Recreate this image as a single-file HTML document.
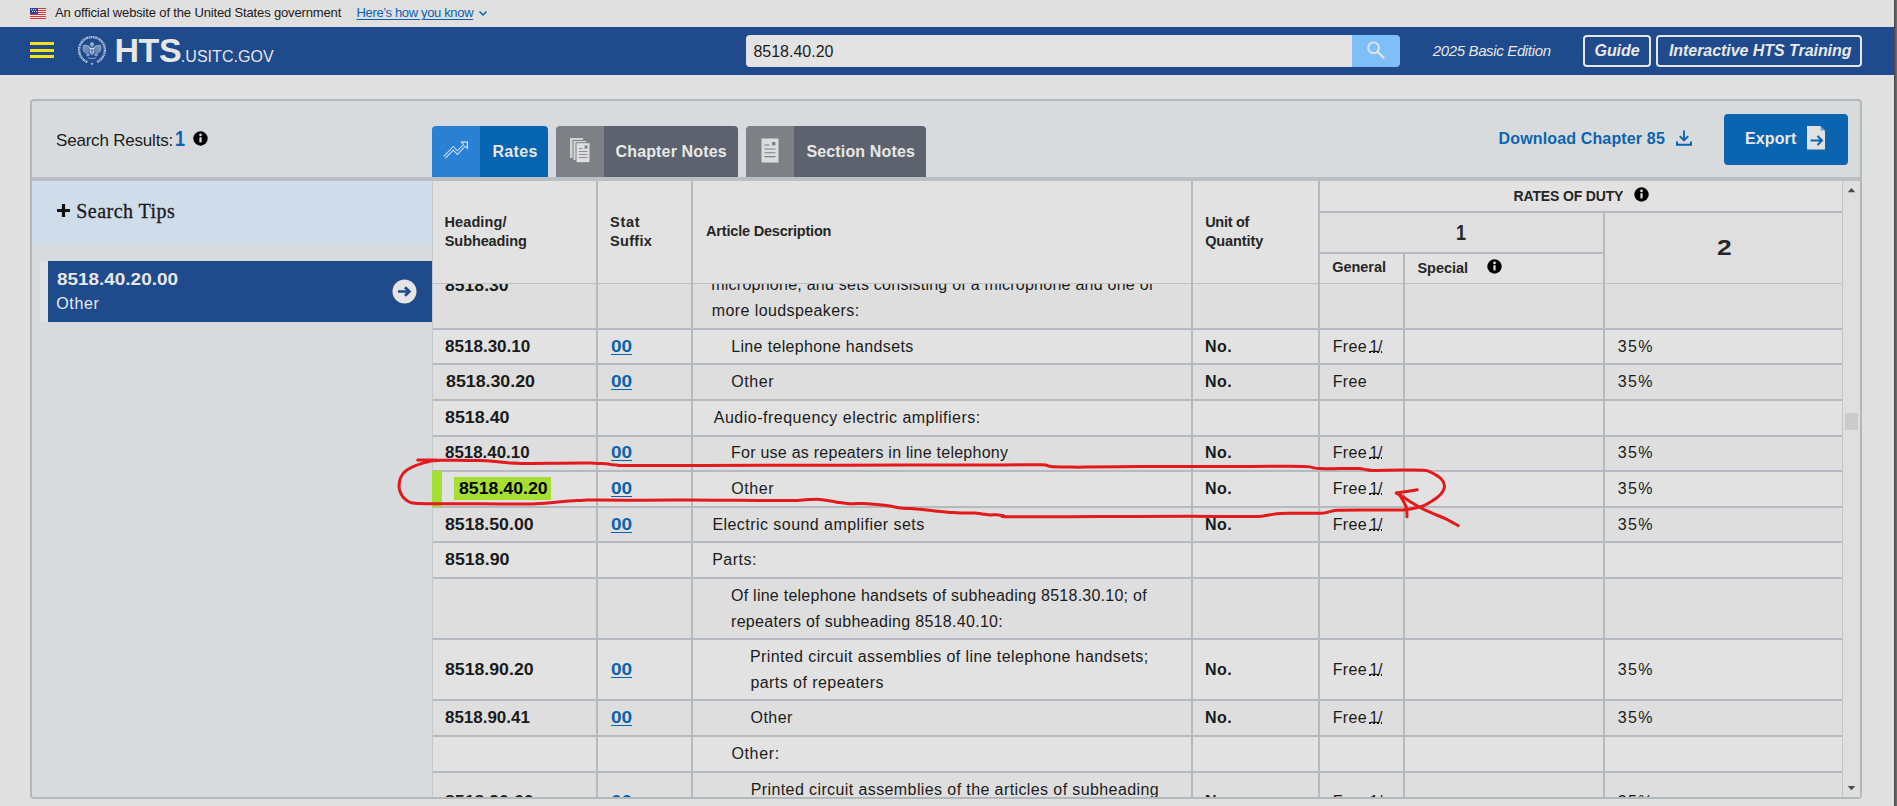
<!DOCTYPE html>
<html lang="en"><head><meta charset="utf-8"><title>Harmonized Tariff Schedule Search</title>
<style>
*{box-sizing:border-box;margin:0;padding:0}
html,body{width:1897px;height:806px;overflow:hidden}
body{position:relative;background:#e0e0e0;font-family:"Liberation Sans",sans-serif;color:#1b1b1b;font-size:16px}
.abs{position:absolute}
.t{position:absolute;white-space:nowrap;line-height:1}
a{color:#0b62ad}
/* banner */
#banner{left:0;top:0;width:1897px;height:27px;background:#e0e0e0}
#nav{left:0;top:27px;width:1897px;height:48px;background:#1f4a8c}
.bar{position:absolute;left:30px;width:24px;height:3px;background:#f7e017}
#searchbox{left:746px;top:35px;width:607px;height:32px;background:#e3e3e3;border-radius:4px 0 0 4px}
#searchbtn{left:1352px;top:35px;width:48px;height:32px;background:#7ebff8;border-radius:0 4px 4px 0}
.navbtn{position:absolute;top:35px;height:32px;border:2px solid #e6e6e6;border-radius:4px;color:#e6e6e6;font-weight:bold;font-style:italic}
/* panel */
#panel{left:30px;top:99px;width:1832px;height:700px;background:#d8dbdd;border:2px solid #b2b9bd;border-radius:4px}
#sep{left:32px;top:177px;width:1828px;height:4px;background:#b9bfc3}
.tab{position:absolute;top:126px;height:51px;border-radius:4px 4px 0 0;overflow:hidden}
.tab .ic{position:absolute;left:0;top:0;width:48px;height:51px}
.tab .tx{position:absolute;left:48px;top:0;right:0;height:51px}
.tab span{position:absolute;color:#e8e8e8;font-weight:bold;white-space:nowrap;line-height:1}
#tips{left:32px;top:181px;width:400px;height:64px;background:#cfdcea}
#item{left:48px;top:261px;width:384px;height:61px;background:#1f4a8c}
#itemedge{left:40px;top:261px;width:8px;height:61px;background:#e0e1e2;border-radius:3px 0 0 3px}
#export{left:1724px;top:114px;width:124px;height:51px;background:#0b64b0;border-radius:4px}
/* table */
#tbl{left:432px;top:181px;width:1411px;height:616px;background:#e2e2e2;overflow:hidden}
.vl{position:absolute;width:2px;background:#b4babf}
.hl{position:absolute;height:2px;background:#b4babf}
.row{position:absolute;left:0;width:1411px}
.row.alt{background:#dedede}
.code{font-weight:bold;left:13px}
.stat{left:179px;font-weight:bold;text-decoration:underline;color:#0b62ad}
.unit{left:773px;font-weight:bold}
.gen{left:901px}
.c2{left:1186px}
.th{position:absolute;font-weight:bold;color:#262626;white-space:nowrap;line-height:1}
#sb{left:1843px;top:181px;width:17px;height:616px;background:#dfdfdf}
#edge{left:1894px;top:0;width:3px;height:806px;background:linear-gradient(90deg,#454545,#5c5c5c 50%,#707070)}

</style></head>
<body>
<!-- ===== top banner ===== -->
<div id="banner" class="abs">
  <svg class="abs" style="left:30px;top:8px" width="16" height="11" viewBox="0 0 16 11">
    <rect width="16" height="11" fill="#e8e8e8"/>
    <g fill="#d83a3a"><rect y="0" width="16" height="1"/><rect y="2" width="16" height="1"/><rect y="4" width="16" height="1"/><rect y="6" width="16" height="1"/><rect y="8" width="16" height="1"/><rect y="10" width="16" height="1"/></g>
    <rect width="8" height="6" fill="#2a3f9d"/>
    <g fill="#e8e8e8"><rect x="1" y="1" width="1" height="1"/><rect x="3" y="1" width="1" height="1"/><rect x="5" y="1" width="1" height="1"/><rect x="2" y="3" width="1" height="1"/><rect x="4" y="3" width="1" height="1"/><rect x="6" y="3" width="1" height="1"/></g>
  </svg>
  <svg class="abs" style="left:478px;top:10px" width="10" height="7" viewBox="0 0 10 7"><path d="M1.5 1.5 L5 5 L8.5 1.5" fill="none" stroke="#0b5fb0" stroke-width="1.5"/></svg>
</div>

<!-- ===== blue nav ===== -->
<div id="nav" class="abs"></div>
<div class="bar" style="top:42px"></div><div class="bar" style="top:49px"></div><div class="bar" style="top:55px"></div>
<svg class="abs" style="left:77px;top:35px" width="30" height="30" viewBox="0 0 30 30">
  <path d="M10.38 27.04 A12.9 12.9 0 1 1 19.62 27.04" fill="none" stroke="#c9d4e8" stroke-opacity=".82" stroke-width="2.4" stroke-dasharray="1.7 .55 1.1 .5 2 .6"/>
  <path d="M15 27.2l.5 1 1.1.1-.8.8.2 1.1-1-.6-1 .6.2-1.1-.8-.8 1.100-.1z" fill="#c9d4e8" fill-opacity=".8"/>
  <g fill="#d5deee" transform="translate(0 -.6)">
    <path d="M13.6 8.2h2.8l.5 2.4-1 1.6h-1.800l-1-1.600z" fill-opacity=".85"/>
    <path d="M13.4 12.600 C11 10.400 8.600 9.800 6.200 10.800 C5.300 12.800 5.400 15 6.400 16.800 C7.600 18.600 9.400 19.600 11.400 19.600 L12.800 15.600z" fill-opacity=".6"/>
    <path d="M16.600 12.600 C19 10.400 21.400 9.800 23.800 10.800 C24.700 12.800 24.600 15 23.600 16.800 C22.400 18.600 20.600 19.600 18.600 19.600 L17.200 15.600z" fill-opacity=".6"/>
    <path d="M12.800 13.400h4.400v5.200l-2.200 2.400-2.200-2.400z" fill-opacity=".95"/>
    <path d="M9 20.200l3.200-1.200 .8 1.800-3 1.400zM21 20.200l-3.200-1.200-.8 1.800 3 1.400z" fill-opacity=".6"/>
    <path d="M10.800 22.800 Q15 24.400 19.200 22.800 L19 23.800 Q15 25.200 11 23.800z" fill-opacity=".6"/>
  </g>
  <g stroke="#1f4a8c" stroke-width=".7" stroke-opacity=".75" fill="none">
    <path d="M7.200 12.200l5 3M6.600 14.200l5.400 2.400M7.400 16.400l4.600 1.400M9 11l3.800 3.600M22.800 12.200l-5 3M23.400 14.200l-5.400 2.400M22.600 16.400l-4.600 1.400M21 11l-3.800 3.600"/>
    <path d="M14.300 14v5.800M15.700 14v5.800M12.800 15.400h4.400M13.800 9.800h2.400"/>
  </g>
</svg>

<div id="searchbox" class="abs"></div>
<div id="searchbtn" class="abs">
  <svg class="abs" style="left:12px;top:4px" width="24" height="24" viewBox="0 0 24 24"><circle cx="9.6" cy="8.8" r="5.4" fill="none" stroke="#e4e4e4" stroke-width="1.9"/><path d="M13.6 12.8 L20.2 19.4" stroke="#e4e4e4" stroke-width="2.2" stroke-linecap="butt"/></svg>
</div>
<div class="navbtn" style="left:1583px;width:68px"></div>
<div class="navbtn" style="left:1656px;width:206px"></div>

<!-- ===== main panel ===== -->
<div id="panel" class="abs"></div>
<svg class="abs" style="left:193px;top:131px" width="15" height="15" viewBox="0 0 15 15"><circle cx="7.5" cy="7.5" r="7.2" fill="#000"/><rect x="6.4" y="6.2" width="2.2" height="5.2" fill="#d8dbdd"/><circle cx="7.5" cy="3.9" r="1.3" fill="#d8dbdd"/></svg>

<!-- tabs -->
<div class="tab" style="left:432px;width:116px">
  <div class="ic" style="background:#2a81d4">
    <svg class="abs" style="left:10px;top:13px" width="28" height="22" viewBox="0 0 28 22">
      <g fill="none" stroke-linejoin="miter" stroke-linecap="butt">
        <path d="M2.600 18.300 L11.400 9.200 L15.400 13.600 L23.200 5.600" stroke="#d4e4f5" stroke-width="3.500"/>
        <path d="M18 2.600 H26 V10.600 Z" fill="#d4e4f5" stroke="none"/>
        <path d="M2.600 18.300 L11.400 9.200 L15.400 13.600 L23.600 5.200" stroke="#2a81d4" stroke-width="1.500"/>
        <path d="M20.600 3.700 H24.900 V8 Z" fill="#2a81d4" stroke="none"/>
      </g>
    </svg>
  </div>
  <div class="tx" style="background:#0764b0"></div>
</div>
<div class="tab" style="left:556px;width:182px">
  <div class="ic" style="background:#7d8185">
    <svg class="abs" style="left:13px;top:11px" width="22" height="26" viewBox="0 0 22 26">
      <path d="M1 1h13v20h-13z" fill="#d3d3d3"/>
      <path d="M4 3.500h13.500v20h-13.500z" fill="#d8d8d8" stroke="#7d8185" stroke-width="1"/>
      <path d="M7 5.700h14v20h-14z" fill="#dedede" stroke="#7d8185" stroke-width="1"/>
      <path d="M10 14.500h8.500M10 17.500h8.500M10 20.500h8.500M10 11.500h3.500" stroke="#8b8f93" stroke-width="1.100"/>
      <rect x="15.500" y="8.500" width="3" height="3" fill="#7d8185"/>
    </svg>
  </div>
  <div class="tx" style="background:#5c626e"></div>
</div>
<div class="tab" style="left:746px;width:180px">
  <div class="ic" style="background:#7d8185">
    <svg class="abs" style="left:15px;top:12px" width="18" height="25" viewBox="0 0 18 25"><path d="M.5 .5h17v24h-17z" fill="#dcdcdc"/><path d="M3.5 11h11M3.5 14.800h11M3.5 18.600h11M3.5 7h5" stroke="#7d8185" stroke-width="1.1"/><rect x="11" y="4" width="3.4" height="3.4" fill="#7d8185"/></svg>
  </div>
  <div class="tx" style="background:#5c626e"></div>
</div>
<svg class="abs" style="left:1675px;top:129px" width="18" height="18" viewBox="0 0 18 18"><path d="M9 1.5v9.5M4.8 7.2 9 11.4l4.2-4.2M2 12.5v3.2h14v-3.2" fill="none" stroke="#0b64b0" stroke-width="1.9"/></svg>
<div id="export" class="abs">
  <svg class="abs" style="left:82px;top:11px" width="20" height="27" viewBox="0 0 20 27"><path d="M1 1h13.500l4.500 4.500v19H1z" fill="#e1e1e1"/><path d="M14.500 1v4.500h4.500" fill="#0b64b0" opacity=".5"/><path d="M4.500 15.500h11.500M11.500 11l4.500 4.500-4.500 4.500" fill="none" stroke="#0b64b0" stroke-width="2"/></svg>
</div>

<div id="sep" class="abs"></div>

<!-- left column -->
<div id="tips" class="abs"></div>
<svg class="abs" style="left:56px;top:203px" width="15" height="15" viewBox="0 0 15 15"><path d="M7.5 1v13M1 7.5h13" stroke="#111" stroke-width="3.2"/></svg>
<div id="itemedge" class="abs"></div>
<div id="item" class="abs">
  <svg class="abs" style="left:344px;top:18px" width="25" height="25" viewBox="0 0 25 25"><circle cx="12.5" cy="12.5" r="12" fill="#e4e4e4"/><path d="M6 12.500h11.500M13 8.200l4.400 4.300-4.400 4.300" fill="none" stroke="#1f4a8c" stroke-width="2.700" stroke-linejoin="miter"/></svg>
</div>

<!-- ===== table ===== -->
<div id="tbl" class="abs">
<div class="row alt" style="top:103px;height:46px"></div>
<div class="hl" style="left:0;top:147px;width:1411px"></div>
<div class="row" style="top:149px;height:35px"></div>
<div class="hl" style="left:0;top:182px;width:1411px"></div>
<div class="row alt" style="top:184px;height:36px"></div>
<div class="hl" style="left:0;top:218px;width:1411px"></div>
<div class="row" style="top:220px;height:36px"></div>
<div class="hl" style="left:0;top:254px;width:1411px"></div>
<div class="row alt" style="top:256px;height:35px"></div>
<div class="hl" style="left:0;top:289px;width:1411px"></div>
<div class="row" style="top:291px;height:36px"></div>
<div class="hl" style="left:0;top:325px;width:1411px"></div>
<div class="abs" style="left:0;top:290px;width:10px;height:36px;background:#a5df32;z-index:3"></div>
<div class="abs" style="left:22px;top:296px;width:97px;height:23px;background:#a5df32"></div>
<div class="row alt" style="top:327px;height:35px"></div>
<div class="hl" style="left:0;top:360px;width:1411px"></div>
<div class="row" style="top:362px;height:36px"></div>
<div class="hl" style="left:0;top:396px;width:1411px"></div>
<div class="row alt" style="top:398px;height:61px"></div>
<div class="hl" style="left:0;top:457px;width:1411px"></div>
<div class="row" style="top:459px;height:61px"></div>
<div class="hl" style="left:0;top:518px;width:1411px"></div>
<div class="row alt" style="top:520px;height:36px"></div>
<div class="hl" style="left:0;top:554px;width:1411px"></div>
<div class="row" style="top:556px;height:36px"></div>
<div class="hl" style="left:0;top:590px;width:1411px"></div>
<div class="row alt" style="top:592px;height:61px"></div>
<div class="hl" style="left:0;top:651px;width:1411px"></div>
<span id="c0" class="t" style="left:13.0px;top:97px;font-size:16px;color:#1b1b1b;font-weight:bold;transform:scaleX(1.1);transform-origin:0 50%;">8518.30</span>
<span id="d0_0" class="t" style="left:279.2px;top:96px;font-size:16px;color:#1b1b1b;letter-spacing:0.25px;">microphone, and sets consisting of a microphone and one of</span>
<span id="d0_1" class="t" style="left:279.8px;top:122px;font-size:16px;color:#1b1b1b;letter-spacing:0.4px;">more loudspeakers:</span>
<span id="c1" class="t" style="left:13.3px;top:158px;font-size:16px;color:#1b1b1b;font-weight:bold;transform:scaleX(1.065);transform-origin:0 50%;">8518.30.10</span>
<span id="s1" class="t" style="left:178.8px;top:158px;font-size:16px;color:#0b62ad;font-weight:bold;transform:scaleX(1.188);transform-origin:0 50%;text-decoration:underline;text-underline-offset:2px">00</span>
<span id="d1_0" class="t" style="left:299.2px;top:158px;font-size:16px;color:#1b1b1b;letter-spacing:0.35px;">Line telephone handsets</span>
<span id="u1" class="t" style="left:773.0px;top:158px;font-size:16px;color:#1b1b1b;font-weight:bold;letter-spacing:0.4px;">No.</span>
<span id="g1" class="t" style="left:900.7px;top:158px;font-size:16px;color:#1b1b1b;letter-spacing:0.35px;">Free</span>
<span id="f1" class="t" style="left:937.4px;top:158px;font-size:16px;color:#1b1b1b;letter-spacing:-0.2px;text-decoration:underline dotted;text-decoration-thickness:1.6px;text-underline-offset:-1px;text-decoration-skip-ink:none">1/</span>
<span id="p1" class="t" style="left:1185.8px;top:158px;font-size:16px;color:#1b1b1b;letter-spacing:1.35px;">35%</span>
<span id="c2" class="t" style="left:13.6px;top:193px;font-size:16px;color:#1b1b1b;font-weight:bold;transform:scaleX(1.111);transform-origin:0 50%;">8518.30.20</span>
<span id="s2" class="t" style="left:178.8px;top:193px;font-size:16px;color:#0b62ad;font-weight:bold;transform:scaleX(1.188);transform-origin:0 50%;text-decoration:underline;text-underline-offset:2px">00</span>
<span id="d2_0" class="t" style="left:299.3px;top:193px;font-size:16px;color:#1b1b1b;letter-spacing:0.55px;">Other</span>
<span id="u2" class="t" style="left:773.0px;top:193px;font-size:16px;color:#1b1b1b;font-weight:bold;letter-spacing:0.4px;">No.</span>
<span id="g2" class="t" style="left:900.7px;top:193px;font-size:16px;color:#1b1b1b;letter-spacing:0.35px;">Free</span>
<span id="p2" class="t" style="left:1185.8px;top:193px;font-size:16px;color:#1b1b1b;letter-spacing:1.35px;">35%</span>
<span id="c3" class="t" style="left:13.0px;top:229px;font-size:16px;color:#1b1b1b;font-weight:bold;transform:scaleX(1.116);transform-origin:0 50%;">8518.40</span>
<span id="d3_0" class="t" style="left:281.8px;top:229px;font-size:16px;color:#1b1b1b;letter-spacing:0.5px;">Audio-frequency electric amplifiers:</span>
<span id="c4" class="t" style="left:13.4px;top:264px;font-size:16px;color:#1b1b1b;font-weight:bold;transform:scaleX(1.056);transform-origin:0 50%;">8518.40.10</span>
<span id="s4" class="t" style="left:178.8px;top:264px;font-size:16px;color:#0b62ad;font-weight:bold;transform:scaleX(1.188);transform-origin:0 50%;text-decoration:underline;text-underline-offset:2px">00</span>
<span id="d4_0" class="t" style="left:299.0px;top:264px;font-size:16px;color:#1b1b1b;letter-spacing:0.25px;">For use as repeaters in line telephony</span>
<span id="u4" class="t" style="left:773.0px;top:264px;font-size:16px;color:#1b1b1b;font-weight:bold;letter-spacing:0.4px;">No.</span>
<span id="g4" class="t" style="left:900.7px;top:264px;font-size:16px;color:#1b1b1b;letter-spacing:0.35px;">Free</span>
<span id="f4" class="t" style="left:937.4px;top:264px;font-size:16px;color:#1b1b1b;letter-spacing:-0.2px;text-decoration:underline dotted;text-decoration-thickness:1.6px;text-underline-offset:-1px;text-decoration-skip-ink:none">1/</span>
<span id="p4" class="t" style="left:1185.8px;top:264px;font-size:16px;color:#1b1b1b;letter-spacing:1.35px;">35%</span>
<span id="c5" class="t" style="left:26.7px;top:300px;font-size:16px;color:#000;font-weight:bold;transform:scaleX(1.108);transform-origin:0 50%;">8518.40.20</span>
<span id="s5" class="t" style="left:178.8px;top:300px;font-size:16px;color:#0b62ad;font-weight:bold;transform:scaleX(1.188);transform-origin:0 50%;text-decoration:underline;text-underline-offset:2px">00</span>
<span id="d5_0" class="t" style="left:299.3px;top:300px;font-size:16px;color:#1b1b1b;letter-spacing:0.55px;">Other</span>
<span id="u5" class="t" style="left:773.0px;top:300px;font-size:16px;color:#1b1b1b;font-weight:bold;letter-spacing:0.4px;">No.</span>
<span id="g5" class="t" style="left:900.7px;top:300px;font-size:16px;color:#1b1b1b;letter-spacing:0.35px;">Free</span>
<span id="f5" class="t" style="left:937.4px;top:300px;font-size:16px;color:#1b1b1b;letter-spacing:-0.2px;text-decoration:underline dotted;text-decoration-thickness:1.6px;text-underline-offset:-1px;text-decoration-skip-ink:none">1/</span>
<span id="p5" class="t" style="left:1185.8px;top:300px;font-size:16px;color:#1b1b1b;letter-spacing:1.35px;">35%</span>
<span id="c6" class="t" style="left:13.4px;top:336px;font-size:16px;color:#1b1b1b;font-weight:bold;transform:scaleX(1.106);transform-origin:0 50%;">8518.50.00</span>
<span id="s6" class="t" style="left:178.8px;top:336px;font-size:16px;color:#0b62ad;font-weight:bold;transform:scaleX(1.188);transform-origin:0 50%;text-decoration:underline;text-underline-offset:2px">00</span>
<span id="d6_0" class="t" style="left:280.4px;top:336px;font-size:16px;color:#1b1b1b;letter-spacing:0.45px;">Electric sound amplifier sets</span>
<span id="u6" class="t" style="left:773.0px;top:336px;font-size:16px;color:#1b1b1b;font-weight:bold;letter-spacing:0.4px;">No.</span>
<span id="g6" class="t" style="left:900.7px;top:336px;font-size:16px;color:#1b1b1b;letter-spacing:0.35px;">Free</span>
<span id="f6" class="t" style="left:937.4px;top:336px;font-size:16px;color:#1b1b1b;letter-spacing:-0.2px;text-decoration:underline dotted;text-decoration-thickness:1.6px;text-underline-offset:-1px;text-decoration-skip-ink:none">1/</span>
<span id="p6" class="t" style="left:1185.8px;top:336px;font-size:16px;color:#1b1b1b;letter-spacing:1.35px;">35%</span>
<span id="c7" class="t" style="left:13.0px;top:371px;font-size:16px;color:#1b1b1b;font-weight:bold;transform:scaleX(1.116);transform-origin:0 50%;">8518.90</span>
<span id="d7_0" class="t" style="left:280.2px;top:371px;font-size:16px;color:#1b1b1b;letter-spacing:0.5px;">Parts:</span>
<span id="d8_0" class="t" style="left:299.0px;top:407px;font-size:16px;color:#1b1b1b;letter-spacing:0.25px;">Of line telephone handsets of subheading 8518.30.10; of</span>
<span id="d8_1" class="t" style="left:299.0px;top:433px;font-size:16px;color:#1b1b1b;letter-spacing:0.3px;">repeaters of subheading 8518.40.10:</span>
<span id="c9" class="t" style="left:13.4px;top:481px;font-size:16px;color:#1b1b1b;font-weight:bold;transform:scaleX(1.106);transform-origin:0 50%;">8518.90.20</span>
<span id="s9" class="t" style="left:178.8px;top:481px;font-size:16px;color:#0b62ad;font-weight:bold;transform:scaleX(1.188);transform-origin:0 50%;text-decoration:underline;text-underline-offset:2px">00</span>
<span id="d9_0" class="t" style="left:317.9px;top:468px;font-size:16px;color:#1b1b1b;letter-spacing:0.4px;">Printed circuit assemblies of line telephone handsets;</span>
<span id="d9_1" class="t" style="left:318.4px;top:494px;font-size:16px;color:#1b1b1b;letter-spacing:0.45px;">parts of repeaters</span>
<span id="u9" class="t" style="left:773.0px;top:481px;font-size:16px;color:#1b1b1b;font-weight:bold;letter-spacing:0.4px;">No.</span>
<span id="g9" class="t" style="left:900.7px;top:481px;font-size:16px;color:#1b1b1b;letter-spacing:0.35px;">Free</span>
<span id="f9" class="t" style="left:937.4px;top:481px;font-size:16px;color:#1b1b1b;letter-spacing:-0.2px;text-decoration:underline dotted;text-decoration-thickness:1.6px;text-underline-offset:-1px;text-decoration-skip-ink:none">1/</span>
<span id="p9" class="t" style="left:1185.8px;top:481px;font-size:16px;color:#1b1b1b;letter-spacing:1.35px;">35%</span>
<span id="c10" class="t" style="left:13.0px;top:529px;font-size:16px;color:#1b1b1b;font-weight:bold;transform:scaleX(1.059);transform-origin:0 50%;">8518.90.41</span>
<span id="s10" class="t" style="left:178.8px;top:529px;font-size:16px;color:#0b62ad;font-weight:bold;transform:scaleX(1.188);transform-origin:0 50%;text-decoration:underline;text-underline-offset:2px">00</span>
<span id="d10_0" class="t" style="left:318.5px;top:529px;font-size:16px;color:#1b1b1b;letter-spacing:0.45px;">Other</span>
<span id="u10" class="t" style="left:773.0px;top:529px;font-size:16px;color:#1b1b1b;font-weight:bold;letter-spacing:0.4px;">No.</span>
<span id="g10" class="t" style="left:900.7px;top:529px;font-size:16px;color:#1b1b1b;letter-spacing:0.35px;">Free</span>
<span id="f10" class="t" style="left:937.4px;top:529px;font-size:16px;color:#1b1b1b;letter-spacing:-0.2px;text-decoration:underline dotted;text-decoration-thickness:1.6px;text-underline-offset:-1px;text-decoration-skip-ink:none">1/</span>
<span id="p10" class="t" style="left:1185.8px;top:529px;font-size:16px;color:#1b1b1b;letter-spacing:1.35px;">35%</span>
<span id="d11_0" class="t" style="left:299.4px;top:565px;font-size:16px;color:#1b1b1b;letter-spacing:0.65px;">Other:</span>
<span id="c12" class="t" style="left:13.4px;top:613px;font-size:16px;color:#1b1b1b;font-weight:bold;transform:scaleX(1.106);transform-origin:0 50%;">8518.90.60</span>
<span id="s12" class="t" style="left:178.8px;top:613px;font-size:16px;color:#0b62ad;font-weight:bold;transform:scaleX(1.188);transform-origin:0 50%;text-decoration:underline;text-underline-offset:2px">00</span>
<span id="d12_0" class="t" style="left:318.7px;top:601px;font-size:16px;color:#1b1b1b;letter-spacing:0.4px;">Printed circuit assemblies of the articles of subheading</span>
<span id="d12_1" class="t" style="left:318.5px;top:626px;font-size:16px;color:#1b1b1b;">8518.21, 8518.22 or 8518.29</span>
<span id="u12" class="t" style="left:773.0px;top:613px;font-size:16px;color:#1b1b1b;font-weight:bold;letter-spacing:0.4px;">No.</span>
<span id="g12" class="t" style="left:900.7px;top:613px;font-size:16px;color:#1b1b1b;letter-spacing:0.35px;">Free</span>
<span id="f12" class="t" style="left:937.4px;top:613px;font-size:16px;color:#1b1b1b;letter-spacing:-0.2px;text-decoration:underline dotted;text-decoration-thickness:1.6px;text-underline-offset:-1px;text-decoration-skip-ink:none">1/</span>
<span id="p12" class="t" style="left:1185.8px;top:613px;font-size:16px;color:#1b1b1b;letter-spacing:1.35px;">35%</span>
  <!-- header overlay -->
  <div class="abs" style="left:0;top:0;width:1411px;height:102px;background:#e2e2e2"></div>
  <div class="abs" style="left:888px;top:32px;width:285px;height:40px;background:#dfdfdf"></div>
  <div class="abs" style="left:1173px;top:32px;width:238px;height:70px;background:#dfdfdf"></div>
  <div class="hl" style="left:0;top:102px;width:1411px;height:1px;background:#bcc1c5"></div>
  <div class="hl" style="left:886px;top:30px;width:525px"></div>
  <div class="hl" style="left:886px;top:71px;width:286px"></div>
  <svg class="abs" style="left:1202px;top:6px" width="15" height="15" viewBox="0 0 15 15"><circle cx="7.5" cy="7.5" r="7.2" fill="#000"/><rect x="6.4" y="6.2" width="2.2" height="5.2" fill="#e2e2e2"/><circle cx="7.5" cy="3.9" r="1.3" fill="#e2e2e2"/></svg>
  <svg class="abs" style="left:1055px;top:78px" width="15" height="15" viewBox="0 0 15 15"><circle cx="7.5" cy="7.5" r="7.2" fill="#000"/><rect x="6.4" y="6.2" width="2.2" height="5.2" fill="#e2e2e2"/><circle cx="7.5" cy="3.9" r="1.3" fill="#e2e2e2"/></svg>
  <span id="h1a" class="t" style="left:12.5px;top:34px;font-size:14.5px;color:#262626;font-weight:bold;letter-spacing:0.1px;">Heading/</span>
<span id="h1b" class="t" style="left:12.8px;top:53px;font-size:14.5px;color:#262626;font-weight:bold;letter-spacing:-0.1px;">Subheading</span>
<span id="h2a" class="t" style="left:178.0px;top:34px;font-size:14.5px;color:#262626;font-weight:bold;letter-spacing:0.75px;">Stat</span>
<span id="h2b" class="t" style="left:178.1px;top:53px;font-size:14.5px;color:#262626;font-weight:bold;letter-spacing:0.3px;">Suffix</span>
<span id="h3" class="t" style="left:274.1px;top:43px;font-size:14.5px;color:#262626;font-weight:bold;letter-spacing:-0.2px;">Article Description</span>
<span id="h4a" class="t" style="left:773.2px;top:34px;font-size:14.5px;color:#262626;font-weight:bold;letter-spacing:-0.3px;">Unit of</span>
<span id="h4b" class="t" style="left:773.2px;top:53px;font-size:14.5px;color:#262626;font-weight:bold;letter-spacing:-0.1px;">Quantity</span>
<span id="h5" class="t" style="left:1081.5px;top:8px;font-size:14px;color:#262626;font-weight:bold;letter-spacing:-0.15px;">RATES OF DUTY</span>
<span id="h6" class="t" style="left:1024.2px;top:41px;font-size:22px;color:#262626;font-weight:bold;transform:scaleX(0.82);transform-origin:0 50%;">1</span>
<span id="h7" class="t" style="left:1284.9px;top:56px;font-size:22px;color:#262626;font-weight:bold;transform:scaleX(1.2);transform-origin:0 50%;">2</span>
<span id="h8" class="t" style="left:900.3px;top:79px;font-size:14.5px;color:#262626;font-weight:bold;letter-spacing:-0.05px;">General</span>
<span id="h9" class="t" style="left:985.5px;top:80px;font-size:14.5px;color:#262626;font-weight:bold;letter-spacing:-0.05px;">Special</span>
  <!-- vertical rules -->
  <div class="vl" style="left:0;top:0;width:1px;height:616px;background:#c3c8cc"></div>
  <div class="vl" style="left:164px;top:0;height:616px"></div>
  <div class="vl" style="left:259px;top:0;height:616px"></div>
  <div class="vl" style="left:759px;top:0;height:616px"></div>
  <div class="vl" style="left:886px;top:0;height:616px"></div>
  <div class="vl" style="left:971px;top:71px;height:545px"></div>
  <div class="vl" style="left:1171px;top:30px;height:586px"></div>
  <div class="vl" style="left:1410px;top:0;width:1px;height:616px;background:#c0c5c9"></div>
</div>
<div id="sb" class="abs">
  <svg class="abs" style="left:4px;top:6px" width="9" height="6" viewBox="0 0 9 6"><path d="M.7 5.2 4.500 1 8.300 5.200z" fill="#4a4a4a"/></svg>
  <div class="abs" style="left:2px;top:232px;width:13px;height:17px;background:#cbcbcb"></div>
  <svg class="abs" style="left:4px;top:604px" width="9" height="6" viewBox="0 0 9 6"><path d="M.7 1 4.500 5.200 8.300 1z" fill="#4a4a4a"/></svg>
</div>

<span id="b1" class="t" style="left:54.9px;top:6px;font-size:13px;color:#1b1b1b;letter-spacing:-0.15px;">An official website of the United States government</span>
<span id="b2" class="t" style="left:356.5px;top:6px;font-size:13px;color:#0b5fb0;letter-spacing:-0.35px;text-decoration:underline;text-underline-offset:1.5px">Here’s how you know</span>
<span id="hts" class="t" style="left:114.5px;top:33px;font-size:34px;color:#e6e6e6;font-weight:bold;letter-spacing:-0.45px;">HTS</span>
<span id="usitc" class="t" style="left:180.8px;top:49px;font-size:16px;color:#e6e6e6;letter-spacing:0.05px;">.USITC.GOV</span>
<span id="q" class="t" style="left:753.4px;top:44px;font-size:16px;color:#1b1b1b;">8518.40.20</span>
<span id="ed" class="t" style="left:1432.7px;top:43px;font-size:15px;color:#e6e6e6;font-style:italic;letter-spacing:-0.35px;">2025 Basic Edition</span>
<span id="nv1" class="t" style="left:1594.5px;top:43px;font-size:16px;color:#e8e8e8;font-weight:bold;font-style:italic;letter-spacing:-0.05px;">Guide</span>
<span id="nv2" class="t" style="left:1668.9px;top:43px;font-size:16px;color:#e8e8e8;font-weight:bold;font-style:italic;letter-spacing:-0.05px;">Interactive HTS Training</span>
<span id="sr" class="t" style="left:56.0px;top:132px;font-size:17px;color:#1b1b1b;letter-spacing:-0.2px;">Search Results:</span>
<span id="sr1" class="t" style="left:175.0px;top:128px;font-size:22px;color:#0b64b0;font-weight:bold;transform:scaleX(0.82);transform-origin:0 50%;">1</span>
<span id="t1" class="t" style="left:492.4px;top:144px;font-size:16px;color:#e8e8e8;font-weight:bold;letter-spacing:0.35px;">Rates</span>
<span id="t2" class="t" style="left:615.5px;top:144px;font-size:16px;color:#e8e8e8;font-weight:bold;letter-spacing:0.15px;">Chapter Notes</span>
<span id="t3" class="t" style="left:806.4px;top:144px;font-size:16px;color:#e8e8e8;font-weight:bold;letter-spacing:0.15px;">Section Notes</span>
<span id="dl" class="t" style="left:1498.5px;top:131px;font-size:16px;color:#0b64b0;font-weight:bold;letter-spacing:0.15px;">Download Chapter 85</span>
<span id="ex" class="t" style="left:1745.1px;top:131px;font-size:16px;color:#e8e8e8;font-weight:bold;letter-spacing:0.1px;">Export</span>
<span id="st" class="t" style="left:76.3px;top:201px;font-size:20px;color:#1b1b1b;font-family:'Liberation Serif',serif;letter-spacing:0.45px;-webkit-text-stroke:.3px #1b1b1b">Search Tips</span>
<span id="i1" class="t" style="left:56.6px;top:272px;font-size:16px;color:#e8e8e8;font-weight:bold;transform:scaleX(1.182);transform-origin:0 50%;">8518.40.20.00</span>
<span id="i2" class="t" style="left:56.2px;top:296px;font-size:16px;color:#e8e8e8;letter-spacing:0.65px;">Other</span>
<!-- red hand-drawn annotation -->
<svg class="abs" style="left:0;top:0;z-index:5" width="1897" height="806" viewBox="0 0 1897 806">
  <g fill="none" stroke="#e3191d" stroke-width="3" stroke-linecap="round" stroke-linejoin="round">
    <path d="M417.7 459.9 C419.4 459.9 424.4 459.9 428.0 460.0 C431.6 460.1 434.5 460.1 439.0 460.2 C443.5 460.2 450.0 460.3 455.0 460.3 C460.0 460.3 464.8 460.3 469.0 460.4 C473.2 460.4 476.5 460.5 480.0 460.6 C483.5 460.7 486.7 460.8 490.0 461.0 C493.3 461.2 496.5 461.8 500.0 462.1 C503.5 462.5 507.5 462.9 511.0 463.1 C514.5 463.3 517.5 463.3 521.0 463.4 C524.5 463.4 525.5 463.4 532.0 463.4 C538.5 463.4 550.3 463.2 560.0 463.2 C569.7 463.1 583.2 463.0 590.0 463.1 C596.8 463.2 597.5 463.4 601.0 463.6 C604.5 463.8 608.3 464.1 611.0 464.4 C613.7 464.6 615.2 464.9 617.0 465.1 C618.8 465.3 614.8 465.4 622.0 465.5 C629.2 465.6 647.0 465.4 660.0 465.4 C673.0 465.4 678.3 465.4 700.0 465.4 C721.7 465.4 756.7 465.4 790.0 465.3 C823.3 465.2 866.7 465.1 900.0 465.1 C933.3 465.1 966.6 465.2 990.0 465.1 C1013.4 465.0 1031.1 464.6 1040.6 464.7 C1050.1 464.8 1044.9 465.2 1047.0 465.6 C1049.1 466.0 1049.8 466.6 1053.3 466.8 C1056.8 467.0 1062.7 466.9 1068.0 467.0 C1073.3 467.1 1072.9 467.2 1084.9 467.1 C1096.9 467.0 1122.5 466.7 1140.0 466.6 C1157.5 466.5 1171.7 466.4 1190.0 466.4 C1208.3 466.4 1231.0 466.4 1250.0 466.4 C1269.0 466.4 1293.6 466.2 1303.9 466.4 C1314.2 466.6 1309.4 467.0 1312.0 467.4 C1314.6 467.8 1315.0 468.4 1319.7 468.6 C1324.4 468.8 1333.5 468.6 1340.0 468.6 C1346.5 468.6 1354.5 468.5 1358.7 468.6 C1363.0 468.7 1363.2 469.1 1365.5 469.4 C1367.8 469.7 1366.7 470.3 1372.4 470.4 C1378.2 470.5 1391.4 470.1 1400.0 470.1 C1408.6 470.1 1418.8 469.9 1423.8 470.2 C1428.8 470.5 1428.0 471.0 1430.0 471.8 C1432.0 472.6 1434.2 473.8 1435.9 474.9 C1437.7 476.0 1439.3 477.0 1440.5 478.2 C1441.7 479.4 1442.6 480.3 1443.3 481.8 C1444.0 483.3 1444.5 485.5 1444.4 487.0 C1444.4 488.5 1443.7 489.8 1443.0 491.0 C1442.3 492.2 1441.6 493.3 1440.5 494.5 C1439.4 495.7 1437.9 496.9 1436.5 498.0 C1435.1 499.1 1434.2 499.7 1432.1 501.0 C1430.0 502.3 1426.6 504.4 1423.8 505.6 C1421.0 506.8 1418.2 507.4 1415.4 508.0 C1412.6 508.6 1409.8 509.0 1407.0 509.4 C1404.2 509.8 1402.2 510.0 1398.6 510.1 C1395.0 510.2 1392.0 510.0 1385.6 510.0 C1379.2 510.0 1368.0 509.9 1360.0 509.9 C1352.0 509.9 1342.6 509.9 1337.6 510.2 C1332.6 510.5 1332.6 511.1 1330.0 511.6 C1327.4 512.1 1326.8 512.9 1321.8 513.2 C1316.8 513.5 1306.8 513.3 1300.0 513.3 C1293.2 513.3 1285.9 513.1 1280.7 513.4 C1275.5 513.7 1272.9 514.4 1269.0 514.9 C1265.1 515.4 1264.8 516.2 1257.5 516.5 C1250.2 516.8 1236.2 516.4 1225.0 516.4 C1213.8 516.4 1210.8 516.3 1190.0 516.3 C1169.2 516.3 1129.8 516.4 1100.0 516.5 C1070.2 516.6 1027.3 516.9 1011.1 516.8 C994.9 516.6 1005.5 516.0 1003.0 515.6 C1000.5 515.2 998.5 514.8 996.3 514.7 C994.1 514.6 992.4 515.0 990.0 514.9 C987.6 514.8 984.6 514.2 982.0 513.9 C979.4 513.6 978.0 513.0 974.5 512.9 C971.0 512.8 964.9 513.2 960.8 513.1 C956.7 513.0 953.9 512.7 950.0 512.4 C946.1 512.1 941.4 511.7 937.6 511.3 C933.8 510.9 930.5 510.4 927.0 510.0 C923.5 509.6 919.7 509.1 916.5 508.9 C913.3 508.6 910.6 508.6 908.0 508.5 C905.4 508.4 903.4 508.5 900.7 508.1 C898.0 507.8 894.6 506.9 892.0 506.4 C889.4 505.9 887.9 505.6 884.9 505.2 C881.9 504.8 877.5 504.5 874.0 504.2 C870.5 503.9 866.8 503.5 863.8 503.4 C860.8 503.3 858.5 503.6 856.0 503.6 C853.5 503.7 851.7 503.9 849.0 503.7 C846.3 503.5 842.8 503.0 840.0 502.6 C837.2 502.2 834.9 501.7 832.2 501.3 C829.5 500.9 826.6 500.4 824.0 500.0 C821.4 499.6 819.9 499.2 816.4 499.2 C812.9 499.2 807.4 499.7 803.0 499.9 C798.6 500.1 800.5 500.5 790.0 500.6 C779.5 500.7 756.7 500.4 740.0 500.3 C723.3 500.2 706.7 500.1 690.0 500.1 C673.3 500.1 655.8 500.2 640.0 500.2 C624.2 500.2 604.3 500.0 595.0 500.0 C585.7 500.0 587.5 500.1 584.0 500.2 C580.5 500.3 577.7 500.5 574.2 500.7 C570.7 500.9 566.5 501.2 563.0 501.5 C559.5 501.8 556.6 502.1 553.1 502.4 C549.6 502.7 545.5 503.1 542.0 503.4 C538.5 503.6 539.0 503.8 532.1 503.9 C525.2 504.0 512.7 503.9 500.4 503.9 C488.1 503.9 470.6 503.7 458.3 503.7 C446.0 503.7 433.2 503.7 426.6 503.7 C420.1 503.7 421.3 503.6 419.0 503.5 C416.7 503.4 414.6 503.4 412.9 503.1 C411.1 502.8 409.7 502.1 408.5 501.5 C407.3 500.9 406.4 500.1 405.5 499.4 C404.6 498.6 403.7 497.9 403.0 497.0 C402.3 496.1 401.8 495.2 401.3 494.2 C400.8 493.2 400.2 492.1 399.9 491.0 C399.5 489.9 399.3 489.0 399.2 487.8 C399.1 486.6 399.1 485.2 399.2 484.0 C399.3 482.8 399.4 481.7 399.7 480.5 C400.0 479.3 400.6 477.9 401.2 476.7 C401.8 475.5 402.5 474.2 403.4 473.1 C404.3 472.0 405.4 471.1 406.6 470.2 C407.8 469.3 409.3 468.6 410.8 467.8 C412.3 467.0 413.7 466.3 415.5 465.6 C417.3 464.9 419.7 464.2 421.4 463.6 C423.1 463.1 424.1 462.7 425.5 462.3 C426.9 461.9 428.4 461.6 429.8 461.3 C431.2 461.0 432.5 460.9 434.0 460.7 C435.5 460.5 438.2 460.4 439.0 460.4"/>
    <path d="M1458.2 525.6 C1456.0 524.5 1449.6 520.8 1445.2 518.7 C1440.8 516.6 1436.3 515.0 1432.1 513.1 C1427.9 511.2 1423.6 509.4 1420.0 507.5 C1416.4 505.6 1413.7 503.8 1410.7 501.9 C1407.8 500.0 1404.7 497.8 1402.3 496.3 C1399.9 494.8 1397.3 493.6 1396.3 493.0"/>
    <path d="M1396.3 493.0 C1397.9 492.8 1402.5 492.1 1406.0 491.6 C1409.5 491.1 1415.3 490.1 1417.2 489.8"/>
    <path d="M1398.5 493.4 C1399.3 494.7 1402.0 498.5 1403.3 501.0 C1404.6 503.5 1405.9 505.8 1406.5 508.4 C1407.1 511.0 1406.9 515.4 1407.0 516.8"/>
  </g>
</svg>
<div id="edge" class="abs"></div>

</body></html>
